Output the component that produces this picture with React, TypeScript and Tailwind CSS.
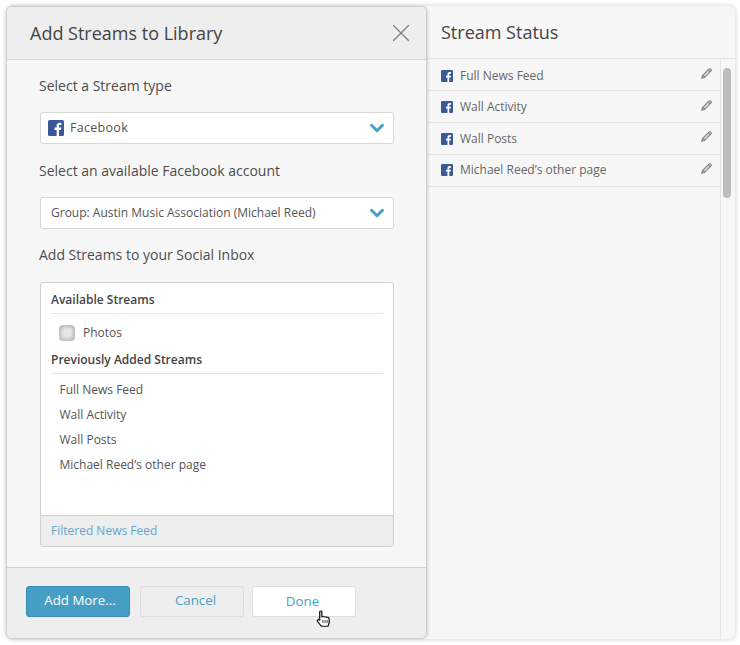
import { X, ChevronDown } from "lucide-react";

const addedStreams = ["Full News Feed", "Wall Activity", "Wall Posts", "Michael Reed’s other page"];

const statusRows = [
  { name: "Full News Feed", textClass: "mt-[2px]", pencilClass: "mb-[2px]" },
  { name: "Wall Activity", textClass: "", pencilClass: "mb-[3px]" },
  { name: "Wall Posts", textClass: "", pencilClass: "mb-[5px]" },
  { name: "Michael Reed’s other page", textClass: "mb-px", pencilClass: "mb-[5px]" },
];

function FbIcon({ size }: { size: number }) {
  return (
    <svg width={size} height={size} viewBox="0 0 16 16" className="shrink-0">
      <rect width="16" height="16" rx="1.5" fill="#3b5998" />
      <path d="M11 16V10h2l.3-2.4H11V6.200c0-.7.2-1.200 1.200-1.200h1.200V2.900c-.2 0-.9-.1-1.800-.1-1.800 0-3 1.100-3 3.100v1.700H6.600V10h2v6z" fill="#fff" />
    </svg>
  );
}

function Pencil({ className }: { className: string }) {
  return (
    <svg width="11" height="11" viewBox="0 0 12 12" fill="#d8d8d8" stroke="#808080" strokeWidth="1.100" className={`shrink-0 ${className}`}>
      <path d="M.8 11.200l.8-3L8.900 1c.4-.4 1-.4 1.400 0l.7.7c.4.4.4 1 0 1.400L3.800 10.400z" />
      <path d="M2 8l2 2M8 2l2 2" />
    </svg>
  );
}

function HandCursor() {
  return (
    <svg width="16" height="18" viewBox="0 0 15 20" preserveAspectRatio="none" className="absolute left-[316px] top-[610px] z-20">
      <path
        d="M3.500 1.500c.8-.8 2-.3 2 .8v5.200c1-.4 1.800-.3 2.300.3.800-.4 1.700-.2 2.100.4.900-.3 1.900 0 2.200.9.300 1 .400 4 0 6l-.8 2.900H5l-3.300-5c-.7-1-.5-1.800.1-2.200.6-.3 1.200 0 1.700.5V2.300c0-.3 0-.6 0-.8z"
        fill="#fff"
        stroke="#111"
        strokeWidth="1.200"
        strokeLinejoin="round"
      />
      <path d="M6.500 11v3.500M8.500 11v3.500M10.500 11v3.500" stroke="#111" strokeWidth="0.800" />
    </svg>
  );
}

function SelectBox({ children }: { children: React.ReactNode }) {
  return (
    <div className="ml-px flex h-[32px] w-[354px] items-center rounded-[3px] border border-[#d6d6d6] bg-white pr-[5px] text-[12.500px] text-[#555]">
      <div className="flex flex-1 items-center">{children}</div>
      <ChevronDown size={22} strokeWidth={3.200} className="text-[#4a9fc6]" />
    </div>
  );
}

export default function App() {
  return (
    <div className="relative h-[645px] w-[740px] bg-white font-['Open_Sans',sans-serif]">
      <div className="absolute left-[6px] top-[6px] flex h-[633px] w-[729px] rounded-[6px] bg-[#f7f7f7] shadow-[0_0_5px_rgba(0,0,0,0.2)]">
        <div className="z-10 flex h-full w-[421px] shrink-0 flex-col rounded-[6px] border border-[#cfcfcf] bg-[#f7f7f7] shadow-[1px_0_3px_rgba(0,0,0,0.15)]">
          <div className="flex h-[53px] shrink-0 items-center justify-between rounded-t-[6px] border-b border-[#d4d4d4] bg-[#eeeeee] pl-[23px] pr-[10px]">
            <h1 className="text-[18px] text-[#444]">Add Streams to Library</h1>
            <X size={30} strokeWidth={1} className="text-[#808080]" />
          </div>

          <div className="flex flex-1 flex-col pl-[32px]">
            <p className="mt-[15px] h-[22px] text-[14px] leading-[22px] text-[#4d4d4d]">Select a Stream type</p>
            <div className="mt-[15px]">
              <SelectBox>
                <span className="ml-[7px]"><FbIcon size={16} /></span>
                <span className="ml-[6px] tracking-[0.3px]">Facebook</span>
              </SelectBox>
            </div>
            <p className="mt-[16px] h-[22px] text-[14px] leading-[22px] text-[#4d4d4d]">Select an available Facebook account</p>
            <div className="mt-[15px]">
              <SelectBox>
                <span className="ml-[10px] text-[12px]">Group: Austin Music Association (Michael Reed)</span>
              </SelectBox>
            </div>
            <p className="mt-[15px] h-[22px] text-[14px] leading-[22px] text-[#4d4d4d]">Add Streams to your Social Inbox</p>

            <div className="ml-px mt-[16px] flex h-[265px] w-[354px] flex-col overflow-hidden rounded-[3px] border border-[#d0d0d0] bg-white">
              <div className="flex-1 px-[10px]">
                <div className="flex h-[31px] items-center border-b border-[#e4e4e4] pt-[3px] text-[12px] font-semibold text-[#444]">Available Streams</div>
                <div className="flex h-[37px] items-center pl-[8px] text-[12px] text-[#555]">
                  <span className="h-[16px] w-[16px] rounded-[3px] border border-[#c8c8c8] bg-[#e8e8e8] shadow-[inset_0_0_4px_rgba(0,0,0,0.35)]" />
                  <span className="ml-[8px]">Photos</span>
                </div>
                <div className="flex h-[23px] items-center border-b border-[#e4e4e4] pb-[4px] text-[12px] font-semibold text-[#444]">Previously Added Streams</div>
                <ul className="pl-[8.500px] pt-[3px] text-[12px] text-[#555]">
                  {addedStreams.map((name) => (
                    <li key={name} className="flex h-[25px] items-center">{name}</li>
                  ))}
                </ul>
              </div>
              <div className="flex h-[31px] shrink-0 items-center border-t border-[#d0d0d0] bg-[#eeeeee] pl-[10px] text-[12px] text-[#5fa8c9]">Filtered News Feed</div>
            </div>
          </div>

          <div className="flex h-[71px] shrink-0 items-start gap-[10px] rounded-b-[6px] border-t border-[#d4d4d4] bg-[#eeeeee] pl-[19px] pt-[18px] text-[13.300px]">
            <button className="h-[31px] w-[104px] rounded-[3px] border border-[#3a8db4] bg-[#479ec5] pb-[2px] pl-[4px] font-medium text-white">Add More...</button>
            <button className="h-[31px] w-[104px] rounded-[3px] border border-[#dcdcdc] bg-[#eeeeee] pb-[2px] pl-[7px] text-[#4a9fc6]">Cancel</button>
            <button className="ml-[-2px] h-[31px] w-[104px] rounded-[3px] border border-[#dedede] bg-white pr-[3px] pt-px text-[#4a9fc6]">Done</button>
          </div>
        </div>

        <div className="flex min-w-0 flex-1 flex-col">
          <div className="flex h-[53px] shrink-0 items-center border-b border-[#e2e2e2] pl-[14px]">
            <h2 className="text-[18px] text-[#444]">Stream Status</h2>
          </div>
          <div className="flex flex-1">
            <ul className="flex-1 border-r border-[#e4e4e4]">
              {statusRows.map((row) => (
                <li key={row.name} className="flex h-[32px] items-center justify-between border-b border-[#e2e2e2] pl-[14px] pr-[8px]">
                  <span className={`flex items-center text-[12px] text-[#666] ${row.textClass}`}>
                    <FbIcon size={12} />
                    <span className="ml-[7px]">{row.name}</span>
                  </span>
                  <Pencil className={row.pencilClass} />
                </li>
              ))}
            </ul>
            <div className="w-[14px] shrink-0 pl-[2px] pt-[9px]">
              <div className="h-[130px] w-[8px] rounded-full bg-[#bdbdbd]" />
            </div>
          </div>
        </div>
      </div>
      <HandCursor />
    </div>
  );
}
